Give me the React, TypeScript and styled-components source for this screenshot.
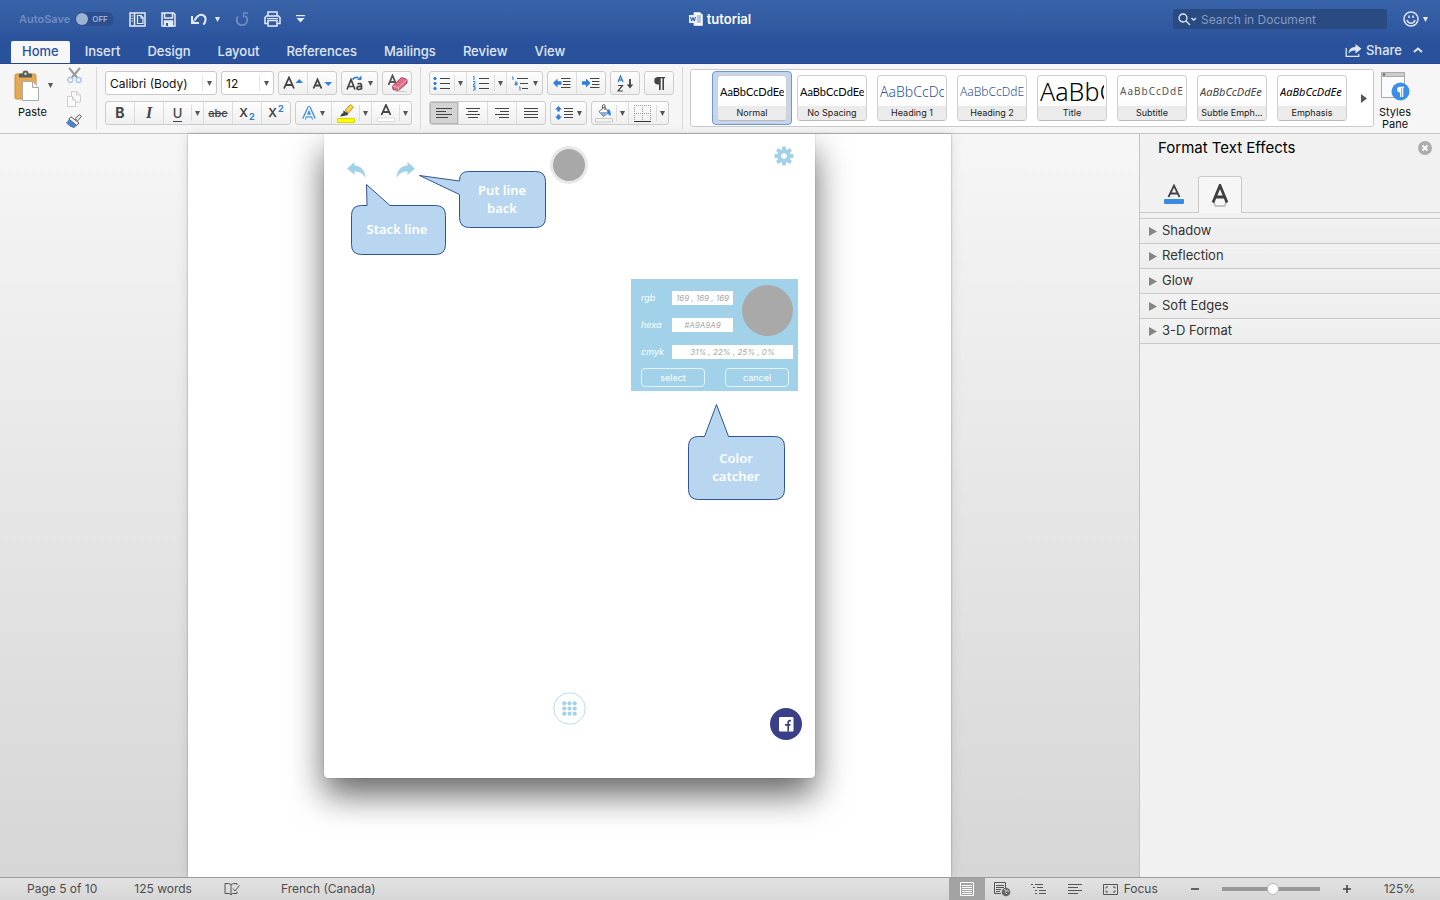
import React from "react";
import styled, { createGlobalStyle, css } from "styled-components";

const Global = createGlobalStyle`
  *, *::before, *::after { box-sizing: border-box; }
  html, body, #root { height: 100%; margin: 0; }
  body { font-family: Inter, "Liberation Sans", sans-serif; font-size: 13px; color: #333; }
  button, input, select { font: inherit; color: inherit; margin: 0; }
  button { background: none; border: 0; padding: 0; cursor: default; }
  svg { display: block; flex: none; }
`;

const blue = "#2e7fdb";
const ink = "#444";
const sky = "#a1d2ea";

const Shell = styled.div`
  display: flex;
  flex-direction: column;
  min-height: 100vh;
`;

/* ---------- header ---------- */

const Header = styled.header`
  background: linear-gradient(#3a64a9, #2a529c 70%, #2a529c);
  border-bottom: 1px solid #24478a;
  height: 64px;
  color: #dfe6f2;
`;

const TitleBar = styled.div`
  display: grid;
  grid-template-columns: 1fr auto 1fr;
  align-items: center;
  height: 38px;
`;

const QuickAccess = styled.div`
  display: flex;
  align-items: center;
  gap: 15px;
  padding-left: 19px;
`;

const AutoSave = styled.label`
  display: flex;
  align-items: center;
  gap: 5px;
  font-size: 11px;
  font-weight: 600;
  color: #6f8dc1;
`;

const Toggle = styled.span`
  display: flex;
  align-items: center;
  gap: 4px;
  width: 39px;
  height: 14px;
  padding: 1px;
  border-radius: 7px;
  background: #2c508e;
  color: #9db2d6;
  font-size: 8px;
  font-weight: 600;

  input {
    appearance: none;
    width: 12px;
    height: 12px;
    border-radius: 6px;
    background: #9fb2d4;
  }
`;

const IconButton = styled.button<{ $gap?: number }>`
  display: flex;
  align-items: center;
  gap: ${p => p.$gap ?? 4}px;
`;

const DocTitle = styled.h1`
  display: flex;
  align-items: center;
  gap: 4px;
  margin: 0;
  color: #fff;
  font-size: 13px;
  font-weight: 600;
`;

const TitleTools = styled.div`
  display: flex;
  justify-content: flex-end;
  align-items: center;
  gap: 16px;
  padding-right: 12px;
`;

const SearchBox = styled.label`
  display: flex;
  align-items: center;
  gap: 4px;
  width: 214px;
  height: 20px;
  padding-left: 5px;
  border-radius: 3px;
  background: #2a4b82;

  input {
    flex: 1;
    min-width: 0;
    padding: 0;
    border: 0;
    background: none;
    font-size: 12px;
    outline: 0;
  }
  input::placeholder { color: #8299c3; opacity: 1; }
`;

const TabBar = styled.nav`
  display: flex;
  align-items: flex-end;
  gap: 3px;
  height: 25px;
  padding: 0 15px 0 11px;
`;

const RibbonTab = styled.button<{ $active?: boolean }>`
  height: 22px;
  padding: 0 12px 2px;
  border-radius: 2px 2px 0 0;
  font-size: 13px;
  font-weight: 500;
  color: #e0e7f3;
  ${p => p.$active && css`
    background: #f7f7f7;
    color: #2a529c;
    padding: 0 11px 2px;
  `}
`;

const ShareTools = styled.div`
  display: flex;
  align-items: center;
  gap: 11px;
  height: 25px;
  margin-left: auto;
  padding: 0 2px 1px 0;
  font-weight: 500;
`;

/* ---------- ribbon ---------- */

const Ribbon = styled.section`
  display: flex;
  height: 70px;
  padding-top: 3px;
  background: #f6f6f6;
  border-bottom: 1px solid #c6c6c6;
`;

const Clipboard = styled.div`
  display: flex;
  width: 96px;
  padding-left: 14px;
  gap: 12px;
`;

const PasteButton = styled.button`
  display: flex;
  flex-direction: column;
  align-items: flex-start;
  align-self: flex-start;
  gap: 4px;
  width: 40px;
  padding-top: 3px;
  font-size: 11px;
  line-height: 14px;
  color: #111;
`;

const PasteFace = styled.span`
  display: flex;
  align-items: center;
  gap: 9px;
`;

const PasteLabel = styled.span`
  padding-left: 4px;
`;

const ClipTools = styled.div`
  display: flex;
  flex-direction: column;
  align-items: center;
  gap: 7px;
`;

const Divider = styled.div`
  width: 1px;
  height: 62px;
  background: #dadada;
`;

const ToolRows = styled.div`
  display: flex;
  flex-direction: column;
  gap: 6px;
  padding: 4px 8px 0;
`;

const ToolRow = styled.div`
  display: flex;
  gap: 4px;
`;

const Group = styled.div`
  display: flex;
  height: 24px;
  border: 1px solid #cdcdcd;
  border-radius: 3px;
  background: linear-gradient(#fdfdfd, #efefef);
  overflow: hidden;
`;

const Tool = styled.button<{ $w: number; $active?: boolean }>`
  display: flex;
  align-items: center;
  justify-content: center;
  gap: 4px;
  width: ${p => p.$w}px;
  color: ${ink};
  & + & { border-left: 1px solid #dcdcdc; }
  ${p => p.$active && css`background: #d3d3d3; box-shadow: inset 0 0 0 1px #b5b5b5;`}
`;

const DropTool = styled.button`
  display: flex;
  align-items: center;
  justify-content: center;
  width: 12px;
  margin: 3px 0;
  border-left: 1px solid #dcdcdc;
  & + ${Tool} { border-left: 1px solid #dcdcdc; }
`;

const Combo = styled.label<{ $w: number }>`
  display: flex;
  align-items: center;
  position: relative;
  width: ${p => p.$w}px;
  height: 24px;
  border: 1px solid #c9c9c9;
  border-radius: 3px;
  background: #fff;

  select {
    appearance: none;
    width: 100%;
    height: 100%;
    padding: 0 14px 0 4px;
    border: 0;
    background: none;
    color: #111;
    font-size: 12px;
  }
`;

const ComboCaret = styled.span`
  position: absolute;
  top: 3px;
  bottom: 3px;
  right: 0;
  display: flex;
  align-items: center;
  justify-content: center;
  width: 14px;
  border-left: 1px solid #e4e4e4;
  pointer-events: none;
`;

const Glyph = styled.span<{ $italic?: boolean; $strike?: boolean; $under?: boolean; $serif?: boolean; $size?: number; $weight?: number }>`
  font-size: ${p => p.$size ?? 14}px;
  line-height: 16px;
  font-weight: ${p => p.$weight ?? 700};
  font-style: ${p => (p.$italic ? "italic" : "normal")};
  font-family: ${p => (p.$serif ? `"Liberation Serif", serif` : "inherit")};
  text-decoration: ${p => (p.$strike ? "line-through" : "none")};
  border-bottom: ${p => (p.$under ? "1px solid #444" : "0")};
`;

const Script = styled.span<{ $up?: boolean }>`
  font-size: 12px;
  font-weight: 600;
  line-height: 16px;
  span {
    margin-left: 1px;
    font-size: 9px;
    font-weight: 700;
    color: ${blue};
    line-height: 0;
    vertical-align: ${p => (p.$up ? "super" : "sub")};
  }
`;

const Gallery = styled.div`
  display: flex;
  flex: 1;
  align-items: center;
  height: 58px;
  margin-top: 2px;
  padding-left: 21px;
  border: 1px solid #cbcbcb;
  border-radius: 3px;
  background: #fff;
  overflow: hidden;
`;

const GalleryArea = styled.div`
  display: flex;
  flex: 1;
  min-width: 0;
  padding-left: 7px;
`;

const StyleItem = styled.button<{ $active?: boolean }>`
  flex: none;
  width: 80px;
  height: 54px;
  padding: 3px 4px;
  border: 1px solid ${p => (p.$active ? "#6f99d2" : "transparent")};
  border-radius: 4px;
  background: ${p => (p.$active ? "#c6d5e9" : "none")};
`;

const StyleCard = styled.span`
  display: flex;
  flex-direction: column;
  height: 46px;
  border: 1px solid #cfcfcf;
  border-bottom-color: #b9b9b9;
  border-radius: 4px;
  background: linear-gradient(#fff 50%, #f8f8f8);
  overflow: hidden;
`;

const Preview = styled.span<{ $size: number; $color: string; $font?: string; $light?: boolean; $italic?: boolean; $wide?: boolean }>`
  display: flex;
  align-items: center;
  height: 30px;
  margin: 0 2px;
  overflow: hidden;
  white-space: nowrap;
  font-family: ${p => p.$font ?? `"Noto Sans"`}, sans-serif;
  font-size: ${p => p.$size}px;
  font-weight: ${p => (p.$light ? 300 : 400)};
  font-style: ${p => (p.$italic ? "italic" : "normal")};
  letter-spacing: ${p => (p.$wide ? "1px" : "normal")};
  color: ${p => p.$color};
`;

const StyleName = styled.span`
  flex: 1;
  background: #ebebeb;
  font-size: 9px;
  line-height: 14px;
  text-align: center;
  color: #222;
`;

const MoreButton = styled.button`
  flex: none;
  display: flex;
  margin: 0 6px 0 auto;
`;

const StylesPane = styled.button`
  display: flex;
  flex-direction: column;
  align-items: center;
  align-self: flex-start;
  width: 66px;
  padding: 4px 24px 0 0;
  gap: 5px;
  font-size: 11px;
  line-height: 12px;
  color: #111;
`;

/* ---------- work area ---------- */

const Main = styled.main`
  display: flex;
  flex: 1;
`;

const Workspace = styled.div`
  display: flex;
  flex: 1;
  justify-content: center;
  background: linear-gradient(#f6f6f6, #d6d6d6);
`;

const Paper = styled.article`
  width: 763px;
  padding: 0 136px;
  background: #fff;
  box-shadow: 0 0 2px rgba(0, 0, 0, 0.35), 0 0 12px rgba(0, 0, 0, 0.1);
  overflow: hidden;
`;

const Shot = styled.div`
  position: relative;
  height: 644px;
  width: 491px;
  border-radius: 0 0 4px 4px;
  background: #fff;
  box-shadow: 0 0 1px rgba(0, 0, 0, 0.5), 0 17px 34px rgba(0, 0, 0, 0.6);
`;

const Pin = styled.div<{ $x: number; $y: number }>`
  position: absolute;
  left: ${p => p.$x}px;
  top: ${p => p.$y}px;
`;

const CalloutText = styled.p<{ $top: number; $h: number; $left: number; $w: number }>`
  position: absolute;
  left: ${p => p.$left}px;
  top: ${p => p.$top}px;
  width: ${p => p.$w}px;
  height: ${p => p.$h}px;
  display: flex;
  align-items: center;
  justify-content: center;
  margin: 0;
  color: #fff;
  font-family: "Noto Sans", sans-serif;
  font-size: 13px;
  font-weight: 600;
  line-height: 18px;
  text-align: center;
`;

const Catcher = styled.form`
  display: grid;
  grid-template-columns: 31px 61px 1fr;
  row-gap: 13px;
  align-items: center;
  width: 167px;
  height: 112px;
  padding: 12px 5px 0 10px;
  align-content: start;
  background: ${sky};
  color: #fff;
  font-size: 9px;
  line-height: 14px;

  label { font-style: italic; }
  input {
    width: 100%;
    height: 14px;
    padding: 0;
    border: 0;
    background: #fff;
    color: #a9a9a9;
    font-size: 8px;
    font-style: italic;
    text-align: center;
  }
`;

const Wide = styled.div`
  grid-column: 2 / 4;
  display: flex;
`;

const Swatch = styled.div`
  grid-column: 3;
  grid-row: 1 / 3;
  justify-self: end;
  align-self: start;
  width: 51px;
  height: 51px;
  margin-top: -6px;
  margin-bottom: -6px;
  border-radius: 50%;
  background: #a9a9a9;
`;

const CatcherActions = styled.div`
  grid-column: 1 / 4;
  display: flex;
  justify-content: space-between;
  margin: -4px 4px 0 0;

  button {
    width: 64px;
    height: 19px;
    border: 1px solid #e4f3fa;
    border-radius: 4px;
    font-size: 9px;
    line-height: 14px;
  }
`;

/* ---------- side panel ---------- */

const Panel = styled.aside`
  width: 301px;
  border-left: 1px solid #c4c4c4;
  background: #f1f1f1;
`;

const PanelHead = styled.div`
  display: flex;
  align-items: center;
  justify-content: space-between;
  height: 28px;
  padding: 0 8px 0 18px;
`;

const PanelTitle = styled.h2`
  margin: 0;
  padding-bottom: 1px;
  color: #000;
  font-size: 15px;
  font-weight: 400;
`;

const PanelTabs = styled.div`
  display: flex;
  height: 51px;
  align-items: flex-end;
  padding-left: 10px;
  border-bottom: 1px solid #cacaca;
`;

const PanelTab = styled.button<{ $active?: boolean }>`
  display: flex;
  align-items: center;
  justify-content: center;
  width: 48px;
  height: 36px;
  ${p => p.$active && css`
    width: 44px;
    height: 37px;
    margin-bottom: -1px;
    border: 1px solid #cacaca;
    border-bottom: 0;
    border-radius: 3px 3px 0 0;
    background: #f6f6f6;
  `}
`;

const Sections = styled.div`
  margin-top: 5px;
  border-top: 1px solid #cacaca;
`;

const Section = styled.button`
  display: flex;
  align-items: center;
  gap: 5px;
  width: 100%;
  height: 25px;
  padding-left: 9px;
  border-bottom: 1px solid #cacaca;
  background: linear-gradient(#f2f2f2, #ededed);
  font-size: 13px;

  span { padding-bottom: 2px; }
`;

/* ---------- status bar ---------- */

const Status = styled.footer`
  display: flex;
  align-items: center;
  height: 23px;
  border-top: 1px solid #9c9c9c;
  background: linear-gradient(#e2e2e2, #d6d6d6);
  color: #4d4d4d;
  font-size: 12px;

  span, output { padding-bottom: 1px; }
`;

const StatusInfo = styled.div`
  display: flex;
  align-items: center;
  gap: 37px;
  padding-left: 27px;
`;

const StatusIcon = styled.button`
  display: flex;
  margin: 0 4px 0 -5px;
`;

const Views = styled.div`
  display: flex;
  align-items: center;
  margin-left: auto;
`;

const ViewButton = styled.button<{ $active?: boolean }>`
  display: flex;
  align-items: center;
  justify-content: center;
  width: 36px;
  height: 22px;
  background: ${p => (p.$active ? "#a3a3a3" : "none")};
`;

const FocusButton = styled.button`
  display: flex;
  align-items: center;
  gap: 6px;
  padding-left: 10px;
`;

const Zoom = styled.div`
  display: flex;
  align-items: center;
  gap: 23px;
  padding: 0 25px 0 33px;

  input {
    appearance: none;
    width: 98px;
    height: 12px;
    background: linear-gradient(#999, #999) center / 100% 4px no-repeat;
  }
  input::-webkit-slider-thumb {
    appearance: none;
    width: 12px;
    height: 12px;
    border: 1px solid #b5b5b5;
    border-radius: 50%;
    background: #fff;
  }
`;

const ZoomValue = styled.output`
  margin-left: 10px;
`;

/* ---------- icons ---------- */

const Caret = ({ color = "#555" }: { color?: string }) => (
  <svg width="5" height="5" viewBox="0 0 5 5"><path d="M0 0h5L2.5 5z" fill={color} /></svg>
);

const SidebarIcon = () => (
  <svg width="17" height="15" viewBox="0 0 17 15" fill="none" stroke="#e6ecf6" strokeWidth="1.5">
    <path d="M1 1h15v13H1zM5.500 1v13" /><path d="M8.500 3.500h3.500l2 2v6h-5.500z" strokeWidth="1.200" /><path d="M12 3v3h2.500" strokeWidth="1.200" />
    <path d="M2.500 4h1.500M2.500 6.500h1.500M2.500 9h1.500" strokeWidth="1" />
  </svg>
);
const SaveIcon = () => (
  <svg width="15" height="15" viewBox="0 0 15 15" fill="none" stroke="#e6ecf6" strokeWidth="1.500">
    <path d="M1 1h11.500L14 2.500V14H1z" /><path d="M3.500 1v5h8V1" /><path d="M3.500 9h8v5h-8z" fill="#e6ecf6" /><path d="M5 11h2v3H5z" fill="#2f58a0" stroke="none" />
  </svg>
);
const UndoIcon = () => (
  <svg width="16" height="13" viewBox="0 0 16 13" fill="none">
    <path d="M3.500 7.500C6 3 8.500 1.200 11.500 2c3.700 1.200 4.200 5.800.8 9.700" stroke="#e6ecf6" strokeWidth="2" />
    <path d="M1 3v7h7" stroke="#e6ecf6" strokeWidth="2" /><path d="M1 10V6l4 4z" fill="#e6ecf6" />
  </svg>
);
const RedoIcon = () => (
  <svg width="14" height="14" viewBox="0 0 14 14" fill="none" stroke="#6f8dc1" strokeWidth="1.800">
    <path d="M3 4.500a5.300 5.300 0 1 0 7.500-.5" /><path d="M8 1h5M8.700 0.500v5" strokeWidth="1.600" />
  </svg>
);
const PrintIcon = () => (
  <svg width="17" height="16" viewBox="0 0 17 16" fill="none" stroke="#e6ecf6" strokeWidth="1.500">
    <path d="M4 5V1h9v4" /><path d="M4 12.500H1V6.500L2.500 5h12L16 6.500v6h-3" /><path d="M4 9.500h9V15H4z" /><path d="M3 7.500h11" strokeWidth="1" />
  </svg>
);
const CustomizeIcon = () => (
  <svg width="9" height="8" viewBox="0 0 9 8" fill="#e6ecf6"><path d="M0 0h9v1.300H0zM0.500 3h8l-4 4.500z" /></svg>
);
const WordIcon = () => (
  <svg width="14" height="14" viewBox="0 0 14 14">
    <path d="M5 .5h6l2.500 2.500v10.500H5z" fill="#fff" stroke="#c9d6ea" /><path d="M7 4h5M7 6h5M7 8h5M7 10h5" stroke="#6b8cc4" />
    <path d="M0 3h8v8H0z" fill="#e8eefa" /><path d="M1.500 5l1.200 4L4 5.500 5.300 9l1.200-4" fill="none" stroke="#2a529c" />
  </svg>
);
const SearchIcon = () => (
  <svg width="19" height="13" viewBox="0 0 19 13" fill="none" stroke="#e6ecf6" strokeWidth="1.300">
    <circle cx="5" cy="5" r="4" /><path d="M8 8l4 4M13.500 5l2.300 2.200L18 5" />
  </svg>
);
const SmileIcon = () => (
  <svg width="16" height="16" viewBox="0 0 16 16" fill="none" stroke="#e0e7f3" strokeWidth="1.500">
    <circle cx="8" cy="8" r="7" /><path d="M4 9c.8 2.500 2.200 3.300 4 3.300S11.200 11.500 12 9" /><path d="M6 4.500v2.500M10 4.500v2.500" />
  </svg>
);
const ShareIcon = () => (
  <svg width="17" height="13" viewBox="0 0 17 13"><path d="M1.200 4v8.300h12.500V10" fill="none" stroke="#e0e7f3" strokeWidth="1.300" /><path d="M3.500 9.500C4 5 6.500 3 10.500 3V0l6 4.700-6 4.800v-3C7.500 6.500 5.500 7 3.500 9.500z" fill="#e0e7f3" /></svg>
);
const ChevronUp = () => (
  <svg width="10" height="6" viewBox="0 0 10 6"><path d="M1 5l4-3.500L9 5" fill="none" stroke="#e0e7f3" strokeWidth="2" /></svg>
);

const PasteIcon = () => (
  <svg width="25" height="31" viewBox="0 0 25 31">
    <rect x="1" y="4" width="21" height="25" rx="1.500" fill="#e5a954" stroke="#c98f3e" />
    <path d="M5 7.500V4.500Q5 3.500 6.500 3.500H8.500a3 3 0 0 1 6 0h2Q18 3.500 18 4.500v3z" fill="#5c5c5c" /><circle cx="11.500" cy="3.800" r="1.200" fill="#ddd" />
    <path d="M8.500 11.500h10l6 6v13h-16z" fill="#fff" stroke="#a9a9a9" /><path d="M18.500 11.500v6h6" fill="#f2f2f2" stroke="#a9a9a9" />
  </svg>
);
const CutIcon = () => (
  <svg width="15" height="17" viewBox="0 0 15 17" fill="none">
    <path d="M2 1l8.500 10M13 1L4.500 11" stroke="#9a9a9a" strokeWidth="2" /><circle cx="3.300" cy="13" r="2.500" stroke="#a9c8ea" strokeWidth="1.400" /><circle cx="11.700" cy="13" r="2.500" stroke="#a9c8ea" strokeWidth="1.400" />
  </svg>
);
const CopyIcon = () => (
  <svg width="14" height="16" viewBox="0 0 14 16" fill="#fafafa" stroke="#cfcfcf"><path d="M4.500 .5h5l4 3.500v7h-9z" /><path d="M.5 5.500h5L8.500 9v6.500h-8z" /><path d="M9.500 .5V4h4M5.500 5.500V9h3" fill="none" /></svg>
);
const BrushIcon = () => (
  <svg width="16" height="14" viewBox="0 0 16 14">
    <path d="M9 4.500L13.500.6 15.500 2.300 11.800 6.800z" fill="#e8e8e8" stroke="#666" /><path d="M5 2.800l8 6.200-2.300 2.500L2.800 5z" fill="#f5f5f5" stroke="#555" />
    <path d="M3 5.500l7.500 5.700L8 13.800Q3 12.500.3 8.500 2 8 3 5.500z" fill="#4c86c6" stroke="#3a6ba5" strokeWidth=".6" />
  </svg>
);

const GrowFont = ({ down }: { down?: boolean }) => (
  <svg width="21" height="14" viewBox="0 0 21 14">
    <path d={down ? "M1.500 12.500L5.500 3.500 9.500 12.500M3 9.500h5" : "M1 12.500L6 1.500 11 12.500M3 9h6"} fill="none" stroke={ink} strokeWidth="1.800" />
    <path d={down ? "M12.500 6h7.500l-3.700 4z" : "M12.500 7h7.500l-3.700-4z"} fill={blue} />
  </svg>
);
const CaseIcon = () => (
  <svg width="18" height="16" viewBox="0 0 18 16" fill="none" stroke={ink} strokeWidth="1.700">
    <path d="M1 14.500L5 4.500 9 14.500M2.500 11.500h5" /><path d="M11.500 9q4-1.500 4 1.500v4M15.500 11.500q-4.500-.5-4.500 1.500 0 1.500 2 1.500t2.500-1.800" />
    <path d="M6.500 4.500Q8.500 1.500 12.500 2.700" stroke={blue} /><path d="M11 5h4.500V.5z" fill={blue} stroke="none" />
  </svg>
);
const EraserIcon = () => (
  <svg width="21" height="18" viewBox="0 0 21 18"><path d="M1.500 11L5.500 1.500 9.500 11M3 8h5" fill="none" stroke="#555" strokeWidth="1.800" /><path d="M8.500 17.500h11" stroke="#ccc" /><path d="M5.500 12L14.500 3.500 20 5.500v3.500L11.500 16.500l-5.500-1z" fill="#dd7089" stroke="#a83f5a" /><path d="M5.500 12l6 1.500L20 5.500M11.500 13.500v3" fill="none" stroke="#f1b2c0" /></svg>
);
const TextEffectIcon = () => (
  <svg width="14" height="15" viewBox="0 0 14 15" fill="none"><path d="M2 13L7 2l5 11M4 9.500h6" stroke="#4194e4" strokeWidth="4" strokeLinejoin="round" /><path d="M2 13.500L7 2l5 11.500M4 9.500h6" stroke="#fff" strokeWidth="1.300" /></svg>
);
const HighlightIcon = () => (
  <svg width="18" height="19" viewBox="0 0 18 19"><path d="M8 6l5.500-5.500 3 2.500L11.500 9z" fill="#f7cf52" stroke="#c79a2c" /><path d="M6.500 6.500l5 3-1.500 2-4-.5z" fill="#444" /><path d="M5.500 9l3 2.500L3 12.500z" fill="#333" /><path d="M.5 14.500h17v4H.5z" fill="#ff0" stroke="#d9d900" /></svg>
);
const FontColorIcon = () => (
  <svg width="18" height="18" viewBox="0 0 18 18"><path d="M4.500 11L9 1l4.500 10M6 8h6" fill="none" stroke={ink} strokeWidth="1.800" /><path d="M.5 14h17v3.500H.5z" fill="#fff" stroke="#ddd" /></svg>
);
const ListIcon = ({ kind }: { kind: "bullet" | "number" | "multi" }) => (
  <svg width="18" height="15" viewBox="0 0 18 15">
    {kind === "multi"
      ? <path d="M6 2.500h11M9 7.500h8M11 12.500h6" stroke={ink} />
      : <path d="M7 2.500h10M7 7.500h10M7 12.500h10" stroke={ink} />}
    <g fill={blue} stroke={blue}>
      {kind === "bullet" && <><circle cx="2" cy="2.500" r="1.200" /><circle cx="2" cy="7.500" r="1.200" /><circle cx="2" cy="12.500" r="1.200" /></>}
      {kind === "number" && <path fill="none" d="M1 .5h1V4M1 5.500h2v1.500L1 9h2.500M1 10.500h2v1.500H1.500M3 12v2H1" />}
      {kind === "multi" && <path fill="none" d="M1 1h1V4M4 6h2v3H4V7.500h2M8 11h1v3.500" />}
    </g>
  </svg>
);
const IndentIcon = ({ out }: { out?: boolean }) => (
  <svg width="18" height="12" viewBox="0 0 18 12"><path d="M8 1.500h9.500M10 4.500h7.500M10 7.500h7.500M8 10.500h9.500" stroke={ink} /><path d={out ? "M0 6l4.500-4.500v2.700h4v3.600h-4v2.700z" : "M8.500 6L4 1.500v2.700H0v3.600h4v2.700z"} fill={blue} /></svg>
);
const SortIcon = () => (
  <svg width="17" height="17" viewBox="0 0 17 17" fill="none"><path d="M1 7L3.500 1 6 7M2 5h3" stroke={blue} strokeWidth="1.300" /><path d="M1 10.500h4.500L1 16h5" stroke={ink} strokeWidth="1.200" /><path d="M13 4v8" stroke={ink} strokeWidth="1.800" /><path d="M9.800 9.500h6.400L13 13.500z" fill={ink} /></svg>
);
const PilcrowIcon = () => (
  <svg width="15" height="15" viewBox="0 0 15 15"><path d="M7 8.500H6A3.700 3.700 0 0 1 6 1H13v1.200h-1V14h-1.600V2.200H8.700V14H7z" fill={ink} /></svg>
);
const AlignIcon = ({ rows }: { rows: [number, number][] }) => (
  <svg width="16" height="12" viewBox="0 0 16 12">{rows.map(([a, b], i) => <path key={i} d={`M${a} ${i * 3 + 1.5}H${b}`} stroke={ink} />)}</svg>
);
const SpacingIcon = () => (
  <svg width="18" height="14" viewBox="0 0 18 14"><path d="M9 2.500h9M9 5.500h9M9 8.500h9M9 11.500h9" stroke={ink} /><path d="M3.500 0l3.500 3.500H4.800v2H2.200v-2H0zM3.500 14l3.500-3.500H4.800v-2H2.200v2H0z" fill={blue} /></svg>
);
const ShadingIcon = () => (
  <svg width="18" height="19" viewBox="0 0 18 19"><path d="M4 7.500l5.500-4.500 4.500 5-5.500 4.500z" fill="#fff" stroke="#666" /><path d="M5 8h8.500l-5 4.200z" fill="#7fb0e6" /><path d="M10 6V1.500q0-1-1.500-.8t-1 1.800v2" fill="none" stroke="#555" /><path d="M13 5Q16.500 6.500 15.500 12 13 11 12 7z" fill={blue} /><path d="M.5 14.500h17v3.500H.5z" fill="#f4f4f4" stroke="#ccc" /></svg>
);
const BorderIcon = () => (
  <svg width="17" height="17" viewBox="0 0 17 17"><path d="M.5 0v16M16.500 0v16M0 .5h17M8.500 0v16M0 8.500h17" stroke="#999" strokeDasharray="1 1" /><path d="M0 16.500h17" stroke="#333" /></svg>
);
const StylesPaneIcon = () => (
  <svg width="30" height="30" viewBox="0 0 30 30"><path d="M1.500 1.500h23v25h-23z" fill="#fbfbfb" stroke="#aaa" /><path d="M1.500 1.500h23v4h-23z" fill="#ccc" stroke="#aaa" /><circle cx="4" cy="3.500" r="1.200" fill="#666" /><circle cx="20.500" cy="20.500" r="9" fill="#3a8ee8" /><path d="M20 21.500a2.900 2.900 0 0 1 0-5.800h4V17h-.7v9h-1.200v-9H21.300v9H20z" fill="#fff" /></svg>
);

const ReplyArrow = ({ flip }: { flip?: boolean }) => (
  <svg width="19" height="17" viewBox="0 0 19 17"><path d={flip ? "M19 6.500L11.500 0v3.500C5 4 1 8 .3 16 3.500 11 6.500 9.500 11.500 9.500V13z" : "M0 6.500L7.500 0v3.500C14 4 18 8 18.700 16 15.500 11 12.500 9.500 7.500 9.500V13z"} fill={sky} /></svg>
);
const GearIcon = () => (
  <svg width="20" height="20" viewBox="-10 -10 20 20" fill={sky}>
    {[0, 45, 90, 135].map(a => <rect key={a} x="-2" y="-9.500" width="4" height="19" rx="1" transform={`rotate(${a})`} />)}
    <circle r="6.800" /><circle r="2.800" fill="#fff" />
  </svg>
);
const GridIcon = () => (
  <svg width="33" height="33" viewBox="0 0 33 33" fill={sky}><circle cx="16.500" cy="16.500" r="15.700" fill="#fff" stroke="#b9deef" />
    {[0, 1, 2].flatMap(r => [0, 1, 2].map(c => <circle key={`${r}${c}`} cx={11.300 + c * 5.200} cy={11.300 + r * 5.200} r="2.100" />))}
  </svg>
);
const FacebookIcon = () => (
  <svg width="32" height="32" viewBox="0 0 32 32"><circle cx="16" cy="16" r="16" fill="#3b3f88" /><rect x="9" y="9" width="14.500" height="14.500" rx="1.200" fill="#fff" /><path d="M21 12.700h-1q-1.800 0-1.800 1.800V23.500M15 16.800h5.500" fill="none" stroke="#3b3f88" strokeWidth="1.700" /></svg>
);
const Bubble = ({ w, h, d }: { w: number; h: number; d: string }) => (
  <svg width={w} height={h} viewBox={`0 0 ${w} ${h}`}><path d={d} fill="#b9d6f0" stroke="#2f5597" strokeLinejoin="round" /></svg>
);

const styleList = [
  { name: "Normal", size: 11, color: "#000", font: "Lato", active: true },
  { name: "No Spacing", size: 11, color: "#000", font: "Lato" },
  { name: "Heading 1", size: 14, color: "#2f5496", light: true },
  { name: "Heading 2", size: 12, color: "#2f5496", light: true },
  { name: "Title", size: 25, color: "#000", light: true },
  { name: "Subtitle", size: 10, color: "#555", wide: true },
  { name: "Subtle Emph...", size: 11, color: "#444", italic: true },
  { name: "Emphasis", size: 11, color: "#000", italic: true },
];

const Drop = ({ label }: { label: string }) => <DropTool aria-label={label}><Caret /></DropTool>;

export default function App() {
  return (
    <Shell>
      <Global />
      <Header>
        <TitleBar>
          <QuickAccess>
            <AutoSave>AutoSave <Toggle><input type="checkbox" role="switch" />OFF</Toggle></AutoSave>
            <IconButton aria-label="Sidebar"><SidebarIcon /></IconButton>
            <IconButton aria-label="Save"><SaveIcon /></IconButton>
            <IconButton $gap={8} aria-label="Undo"><UndoIcon /><Caret color="#e6ecf6" /></IconButton>
            <IconButton aria-label="Redo"><RedoIcon /></IconButton>
            <IconButton aria-label="Print"><PrintIcon /></IconButton>
            <IconButton aria-label="Customize toolbar"><CustomizeIcon /></IconButton>
          </QuickAccess>
          <DocTitle><WordIcon />tutorial</DocTitle>
          <TitleTools>
            <SearchBox><SearchIcon /><input type="search" aria-label="Search" placeholder="Search in Document" /></SearchBox>
            <IconButton aria-label="Feedback"><SmileIcon /><Caret color="#e6ecf6" /></IconButton>
          </TitleTools>
        </TitleBar>
        <TabBar>
          {["Home", "Insert", "Design", "Layout", "References", "Mailings", "Review", "View"].map((t, i) => (
            <RibbonTab key={t} $active={i === 0}>{t}</RibbonTab>
          ))}
          <ShareTools>
            <IconButton><ShareIcon />Share</IconButton>
            <IconButton aria-label="Collapse ribbon"><ChevronUp /></IconButton>
          </ShareTools>
        </TabBar>
      </Header>

      <Ribbon>
        <Clipboard>
          <PasteButton>
            <PasteFace><PasteIcon /><Caret /></PasteFace>
            <PasteLabel>Paste</PasteLabel>
          </PasteButton>
          <ClipTools>
            <IconButton aria-label="Cut"><CutIcon /></IconButton>
            <IconButton aria-label="Copy"><CopyIcon /></IconButton>
            <IconButton aria-label="Format painter"><BrushIcon /></IconButton>
          </ClipTools>
        </Clipboard>
        <Divider />
        <ToolRows>
          <ToolRow>
            <Combo $w={112}><select aria-label="Font"><option>Calibri (Body)</option></select><ComboCaret><Caret /></ComboCaret></Combo>
            <Combo $w={53}><select aria-label="Font size"><option>12</option></select><ComboCaret><Caret /></ComboCaret></Combo>
            <Group>
              <Tool $w={28} aria-label="Grow font"><GrowFont /></Tool>
              <Tool $w={29} aria-label="Shrink font"><GrowFont down /></Tool>
            </Group>
            <Group><Tool $w={35} aria-label="Change case"><CaseIcon /><Caret /></Tool></Group>
            <Group><Tool $w={28} aria-label="Clear formatting"><EraserIcon /></Tool></Group>
          </ToolRow>
          <ToolRow>
            <Group>
              <Tool $w={28}><Glyph>B</Glyph></Tool>
              <Tool $w={29}><Glyph $italic $serif $size={16}>I</Glyph></Tool>
              <Tool $w={28}><Glyph $under $size={13} $weight={500}>U</Glyph></Tool>
              <Drop label="Underline style" />
              <Tool $w={29}><Glyph $strike $size={11} $weight={500}>abc</Glyph></Tool>
              <Tool $w={29}><Script>X<span>2</span></Script></Tool>
              <Tool $w={29}><Script $up>X<span>2</span></Script></Tool>
            </Group>
            <Group>
              <Tool $w={35} aria-label="Text effects"><TextEffectIcon /><Caret /></Tool>
              <Tool $w={28} aria-label="Highlight"><HighlightIcon /></Tool>
              <Drop label="Highlight colour" />
              <Tool $w={28} aria-label="Font colour"><FontColorIcon /></Tool>
              <Drop label="More font colours" />
            </Group>
          </ToolRow>
        </ToolRows>
        <Divider />
        <ToolRows>
          <ToolRow>
            <Group>
              <Tool $w={24} aria-label="Bullets"><ListIcon kind="bullet" /></Tool>
              <Drop label="Bullet styles" />
              <Tool $w={28} aria-label="Numbering"><ListIcon kind="number" /></Tool>
              <Drop label="Number styles" />
              <Tool $w={36} aria-label="Multilevel list"><ListIcon kind="multi" /><Caret /></Tool>
            </Group>
            <Group>
              <Tool $w={28} aria-label="Decrease indent"><IndentIcon out /></Tool>
              <Tool $w={29} aria-label="Increase indent"><IndentIcon /></Tool>
            </Group>
            <Group><Tool $w={28} aria-label="Sort"><SortIcon /></Tool></Group>
            <Group><Tool $w={28} aria-label="Show marks"><PilcrowIcon /></Tool></Group>
          </ToolRow>
          <ToolRow>
            <Group>
              <Tool $w={28} $active aria-label="Align left"><AlignIcon rows={[[0, 16], [0, 10], [0, 16], [0, 12]]} /></Tool>
              <Tool $w={29} aria-label="Center"><AlignIcon rows={[[1, 15], [3, 13], [1, 15], [3, 13]]} /></Tool>
              <Tool $w={29} aria-label="Align right"><AlignIcon rows={[[1, 15], [6, 15], [1, 15], [5, 15]]} /></Tool>
              <Tool $w={29} aria-label="Justify"><AlignIcon rows={[[1, 15], [1, 15], [1, 15], [1, 15]]} /></Tool>
            </Group>
            <Group><Tool $w={35} aria-label="Line spacing"><SpacingIcon /><Caret /></Tool></Group>
            <Group>
              <Tool $w={24} aria-label="Shading"><ShadingIcon /></Tool>
              <Drop label="Shading colour" />
              <Tool $w={28} aria-label="Borders"><BorderIcon /></Tool>
              <Drop label="Border styles" />
            </Group>
          </ToolRow>
        </ToolRows>
        <Divider />
        <GalleryArea>
          <Gallery>
            {styleList.map(s => (
              <StyleItem key={s.name} $active={s.active}>
                <StyleCard>
                  <Preview $size={s.size} $color={s.color} $font={s.font} $light={s.light} $italic={s.italic} $wide={s.wide}>AaBbCcDdEe</Preview>
                  <StyleName>{s.name}</StyleName>
                </StyleCard>
              </StyleItem>
            ))}
            <MoreButton aria-label="More styles"><svg width="6" height="9" viewBox="0 0 6 9"><path d="M0 0l6 4.500L0 9z" fill="#555" /></svg></MoreButton>
          </Gallery>
        </GalleryArea>
        <StylesPane><StylesPaneIcon />Styles Pane</StylesPane>
      </Ribbon>

      <Main>
        <Workspace>
          <Paper>
            <Shot>
              <Pin $x={23} $y={28}><ReplyArrow /></Pin>
              <Pin $x={72} $y={28}><ReplyArrow flip /></Pin>
              <Pin $x={226} $y={12}><svg width="38" height="38"><circle cx="19" cy="19" r="19" fill="#e9e9e9" /><circle cx="19" cy="19" r="16" fill="#a8a8a8" /></svg></Pin>
              <Pin $x={450} $y={12}><GearIcon /></Pin>
              <Pin $x={26} $y={49}>
                <Bubble w={97} h={73} d="M11.500 22.500H17L16.500 1.500 40 22.500H85.500Q95.500 22.500 95.500 32.500V61.500Q95.500 71.500 85.500 71.500H11.500Q1.500 71.500 1.500 61.500V32.500Q1.500 22.500 11.500 22.500Z" />
                <CalloutText $left={0} $top={22} $w={94} $h={48}>Stack line</CalloutText>
              </Pin>
              <Pin $x={94} $y={36}>
                <Bubble w={130} h={60} d="M41.500 10.500V10.500Q41.500 1.500 50.500 1.500H117.500Q127.500 1.500 127.500 11.500V47.500Q127.500 57.500 117.500 57.500H51.500Q41.500 57.500 41.500 47.500V24.500L1.500 5.500 41.500 11Z" />
                <CalloutText $left={42} $top={2} $w={84} $h={54}>Put line<br />back</CalloutText>
              </Pin>
              <Pin $x={307} $y={145}>
                <Catcher>
                  <label htmlFor="rgb">rgb</label><input id="rgb" defaultValue="169 , 169 , 169" />
                  <Swatch />
                  <label htmlFor="hexa">hexa</label><input id="hexa" defaultValue="#A9A9A9" />
                  <label htmlFor="cmyk">cmyk</label><Wide><input id="cmyk" defaultValue="31% , 22% , 25% , 0%" /></Wide>
                  <CatcherActions><button type="button">select</button><button type="button">cancel</button></CatcherActions>
                </Catcher>
              </Pin>
              <Pin $x={363} $y={269}>
                <Bubble w={99} h={98} d="M11.500 33.500H17.500L29.500 1.500 41.500 33.500H87.500Q97.500 33.500 97.500 43.500V86.500Q97.500 96.500 87.500 96.500H11.500Q1.500 96.500 1.500 86.500V43.500Q1.500 33.500 11.500 33.500Z" />
                <CalloutText $left={1} $top={33} $w={96} $h={62}>Color<br />catcher</CalloutText>
              </Pin>
              <Pin $x={229} $y={558}><GridIcon /></Pin>
              <Pin $x={446} $y={574}><FacebookIcon /></Pin>
            </Shot>
          </Paper>
        </Workspace>
        <Panel>
          <PanelHead>
            <PanelTitle>Format Text Effects</PanelTitle>
            <IconButton aria-label="Close"><svg width="14" height="14" viewBox="0 0 14 14"><circle cx="7" cy="7" r="7" fill="#adadad" /><path d="M4.500 4.500l5 5M9.500 4.500l-5 5" stroke="#fff" strokeWidth="1.800" /></svg></IconButton>
          </PanelHead>
          <PanelTabs>
            <PanelTab aria-label="Text fill"><svg width="20" height="20" viewBox="0 0 20 20"><path d="M4.500 13L10 1.500l5.500 11.500M6.500 9.500h7" fill="none" stroke={ink} strokeWidth="1.800" /><rect y="15" width="20" height="5" rx="1" fill="#3a8ae0" /></svg></PanelTab>
            <PanelTab $active aria-label="Text effects"><svg width="18" height="23" viewBox="0 0 18 23" fill="none"><path d="M2.500 18L4.500 22h9l2-4" stroke="#c4c4c4" strokeWidth="2" /><path d="M2 18.500L9 1.500l7 17M4.500 13h9" stroke="#3f3f3f" strokeWidth="2.800" /></svg></PanelTab>
          </PanelTabs>
          <Sections>
            {["Shadow", "Reflection", "Glow", "Soft Edges", "3-D Format"].map(s => (
              <Section key={s}><svg width="8" height="9" viewBox="0 0 8 9"><path d="M0 0l8 4.500L0 9z" fill="#858585" /></svg><span>{s}</span></Section>
            ))}
          </Sections>
        </Panel>
      </Main>

      <Status>
        <StatusInfo>
          <span>Page 5 of 10</span>
          <span>125 words</span>
          <StatusIcon aria-label="Proofing"><svg width="16" height="14" viewBox="0 0 16 14" fill="none" stroke="#555"><path d="M7 2.500Q5 1 1 1.500v10h4.500L7 13l1.500-1.500H13V9.500M7 2.500V13M7 2.500Q8.500 1.300 13 1.500V3M9 6.500L11 9l4.500-5.500" /></svg></StatusIcon>
          <span>French (Canada)</span>
        </StatusInfo>
        <Views>
          <ViewButton $active aria-label="Print layout"><svg width="14" height="14" viewBox="0 0 14 14" fill="none" stroke="#fff"><path d="M.5 .5h13v13H.5zM2 3.500h10M2 5.500h10M2 7.500h10M2 9.500h10M2 11.500h10" /></svg></ViewButton>
          <ViewButton aria-label="Web layout"><svg width="17" height="15" viewBox="0 0 17 15" fill="none" stroke="#555"><path d="M7 11.500H.5V.5h11V6M2 3.500h8M2 5.500h8M2 7.500h5M2 9.500h4" /><circle cx="12" cy="10" r="4.300" fill="#666" stroke="none" /><path d="M10 7.500l2.500 1-1 2 1.500 1.500M13.500 7.500l1 2.500" stroke="#ddd" /></svg></ViewButton>
          <ViewButton aria-label="Outline"><svg width="15" height="12" viewBox="0 0 15 12" stroke="#555"><path d="M0 1.500h2M4 1.500h8M2 4.500h2M6 4.500h6M4 7.500h2M8 7.500h7M4 10.500h2M8 10.500h7" /></svg></ViewButton>
          <ViewButton aria-label="Draft"><svg width="14" height="12" viewBox="0 0 14 12" stroke="#555"><path d="M0 1.500h14M0 4.500h10M0 7.500h14M0 10.500h10" /></svg></ViewButton>
          <FocusButton><svg width="15" height="11" viewBox="0 0 15 11" fill="none" stroke="#555"><path d="M.5 .5h14v10H.5z" /><path d="M3 4.500v-1.500h2M10 3h2v1.500M12 6.500V8h-2M5 8H3V6.500" /></svg><span>Focus</span></FocusButton>
          <Zoom>
            <IconButton aria-label="Zoom out"><svg width="8" height="8" viewBox="0 0 8 8"><path d="M0 4h8" stroke="#444" strokeWidth="1.600" /></svg></IconButton>
            <input type="range" min="10" max="240" defaultValue="130" aria-label="Zoom" />
            <IconButton aria-label="Zoom in"><svg width="8" height="8" viewBox="0 0 8 8"><path d="M0 4h8M4 0v8" stroke="#444" strokeWidth="1.600" /></svg></IconButton>
            <ZoomValue>125%</ZoomValue>
          </Zoom>
        </Views>
      </Status>
    </Shell>
  );
}
